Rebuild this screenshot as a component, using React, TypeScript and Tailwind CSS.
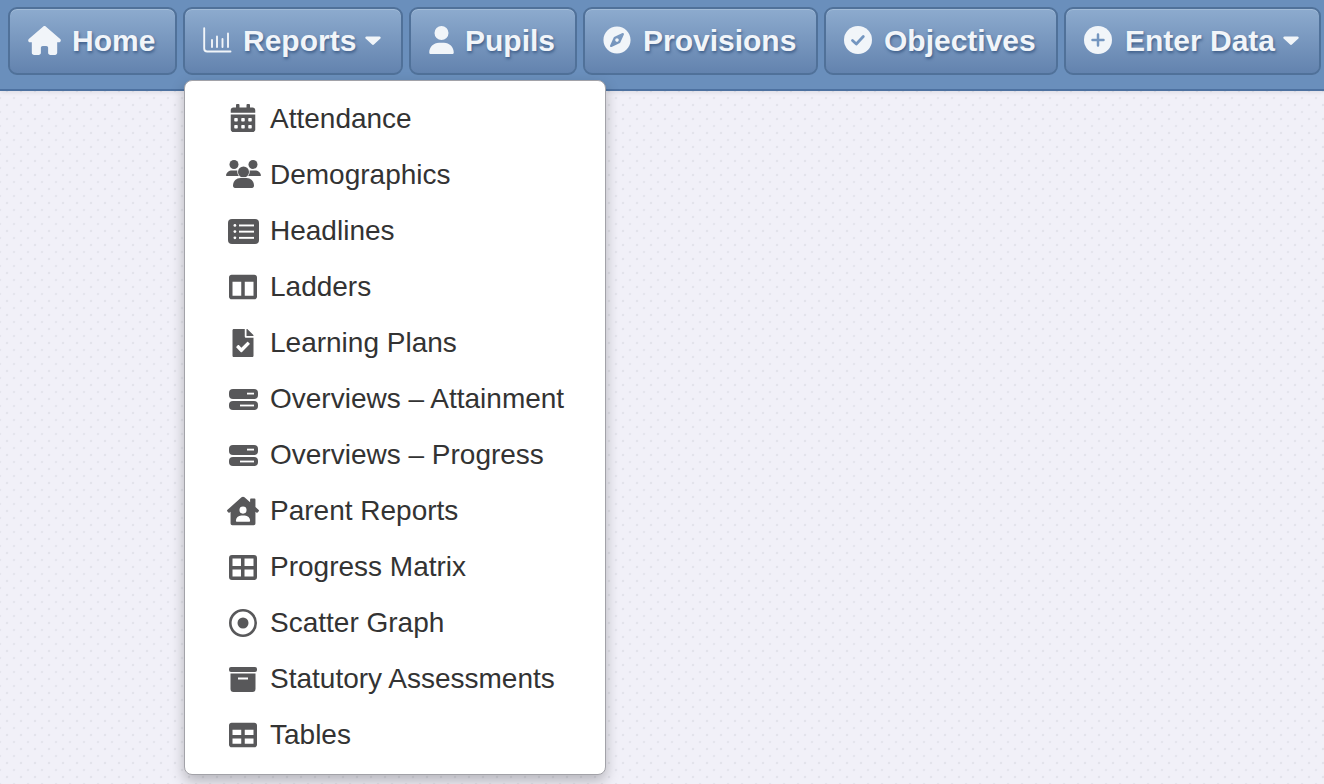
import React from "react";
import { FaCompass, FaCalendarAlt, FaColumns, FaHouseUser, FaTable } from "react-icons/fa";
import { FaHouse, FaUser } from "react-icons/fa6";

const ChartIcon = () => (
  <svg viewBox="0 0 29 26" className="w-[29px] h-[26px]" fill="none" stroke="currentColor" strokeWidth="1.9" strokeLinecap="round">
    <path d="M1.2 1.2 V21.5 a3 3 0 0 0 3 3 H27.500" />
    <path d="M9 13 V20 M14 9.500 V20 M19.500 12 V20 M25 6.500 V20" />
  </svg>
);

const Caret = () => (
  <svg viewBox="0 0 16 9" className="w-[16px] h-[9px]" fill="currentColor">
    <path d="M1.500 0.500h13a1.200 1.200 0 0 1 .9 2l-6.500 6a1.200 1.200 0 0 1-1.800 0l-6.500-6a1.200 1.200 0 0 1 .9-2z" />
  </svg>
);

const CheckCircle = () => (
  <svg viewBox="0 0 28 28" className="w-[28px] h-[28px]">
    <circle cx="14" cy="14" r="14" fill="currentColor" />
    <path d="M8.500 14.500l3.800 3.500 7-7.500" fill="none" stroke="#7496c0" strokeWidth="2.800" strokeLinecap="round" strokeLinejoin="round" />
  </svg>
);

const PlusCircle = () => (
  <svg viewBox="0 0 28 28" className="w-[28px] h-[28px]">
    <circle cx="14" cy="14" r="14" fill="currentColor" />
    <path d="M14 8.500v11M8.500 14h11" fill="none" stroke="#7496c0" strokeWidth="2.500" strokeLinecap="round" />
  </svg>
);

const FileCheck = () => (
  <svg viewBox="0 0 384 512" className="w-[24px] h-[28px]" fill="currentColor">
    <path d="M384 121.900V128H256V0h6.100c6.400 0 12.500 2.500 17 7l97.900 98c4.500 4.500 7 10.600 7 16.900zM248 160c-13.200 0-24-10.800-24-24V0H24C10.700 0 0 10.700 0 24v464c0 13.300 10.700 24 24 24h336c13.300 0 24-10.700 24-24V160H248zm65 121l-143 142c-4.700 4.600-12.200 4.600-16.900-.1l-82.600-83.300c-4.600-4.700-4.600-12.200.1-16.900l28.400-28.200c4.700-4.600 12.200-4.600 16.900.1l46 46.400 106.300-105.400c4.700-4.600 12.200-4.600 16.900.1l28.200 28.400c4.600 4.700 4.600 12.200-.2 16.800z" />
  </svg>
);

const Servers = () => (
  <svg viewBox="0 0 29 21" className="w-[29px] h-[21px]">
    <rect x="0" y="0" width="29" height="10" rx="4" fill="currentColor" />
    <rect x="0" y="12" width="29" height="9" rx="4" fill="currentColor" />
    <rect x="18" y="3.700" width="7" height="1.800" fill="#ffffff" />
    <rect x="11" y="15.600" width="14" height="1.800" fill="#ffffff" />
  </svg>
);

const Grid = () => (
  <svg viewBox="0 0 28 25" className="w-[28px] h-[25px]" fill="currentColor" fillRule="evenodd">
    <path d="M3 0h22a3 3 0 0 1 3 3v19a3 3 0 0 1-3 3H3a3 3 0 0 1-3-3V3a3 3 0 0 1 3-3zm.500 3.500v7.500h8.500V3.500zm12 0v7.500h9V3.500zm-12 11v7h8.500v-7zm12 0v7h9v-7z" />
  </svg>
);

const People = () => (
  <svg viewBox="0 0 35 30" className="w-[35px] h-[30px]" fill="currentColor">
    <circle cx="8" cy="4.500" r="4.500" />
    <circle cx="27" cy="4.500" r="4.500" />
    <path d="M0 16c0-3.500 3-5.500 6-5.500h5c3 0 4 2 4 5.500H1c-.6 0-1-.2-1-.5z" />
    <path d="M35 16c0-3.500-3-5.500-6-5.500h-5c-3 0-4 2-4 5.500h14c.6 0 1-.2 1-.5z" />
    <circle cx="17.500" cy="12" r="5.500" stroke="#ffffff" strokeWidth="1.400" paintOrder="stroke" />
    <path d="M7 25.500c0-4.500 3.500-7.500 7.500-7.500h6c4 0 7.500 3 7.500 7.500 0 1.500-.8 2.500-2 2.500H9c-1.200 0-2-1-2-2.500z" stroke="#ffffff" strokeWidth="1.400" paintOrder="stroke" />
  </svg>
);

const ListBox = () => (
  <svg viewBox="0 0 31 25" className="w-[31px] h-[25px]">
    <rect width="31" height="25" rx="4" fill="currentColor" />
    <g fill="#ffffff">
      <rect x="5.500" y="5" width="2.800" height="2.800" rx="1.400" />
      <rect x="5.500" y="11.200" width="2.800" height="2.800" rx="1.400" />
      <rect x="5.500" y="17.400" width="2.800" height="2.800" rx="1.400" />
      <rect x="11" y="5.500" width="15" height="1.900" />
      <rect x="11" y="11.700" width="15" height="1.900" />
      <rect x="11" y="17.900" width="15" height="1.900" />
    </g>
  </svg>
);

const Target = () => (
  <svg viewBox="0 0 28 28" className="w-[28px] h-[28px]" fill="none">
    <circle cx="14" cy="14" r="12.700" stroke="currentColor" strokeWidth="2.600" />
    <circle cx="14" cy="14" r="5.500" fill="currentColor" />
  </svg>
);

const Box = () => (
  <svg viewBox="0 0 28 25" className="w-[28px] h-[25px]" fill="currentColor">
    <rect x="0" y="0" width="28" height="5" rx="2" />
    <path d="M1.500 6.500h25V22a3 3 0 0 1-3 3h-19a3 3 0 0 1-3-3z" />
    <rect x="9" y="10.500" width="10" height="2" fill="#ffffff" />
  </svg>
);

const navItems: { label: string; icon: React.ReactNode; caret?: string; width: string; gap: string }[] = [
  { label: "Home", icon: <FaHouse className="w-[33px] h-[29px]" />, width: "w-[169px]", gap: "gap-[11px]" },
  { label: "Reports", icon: <ChartIcon />, caret: "ml-[-2px]", width: "w-[220px]", gap: "gap-[11px]" },
  { label: "Pupils", icon: <FaUser className="w-[25px] h-[28px]" />, width: "w-[168px]", gap: "gap-[11px]" },
  { label: "Provisions", icon: <FaCompass className="w-[28px] h-[28px]" />, width: "w-[235px]", gap: "gap-[12px]" },
  { label: "Objectives", icon: <CheckCircle />, width: "w-[234px]", gap: "gap-[12px]" },
  { label: "Enter Data", icon: <PlusCircle />, caret: "ml-[-5px]", width: "w-[257px]", gap: "gap-[13px]" },
];

const menuItems: { label: string; icon: React.ReactNode }[] = [
  { label: "Attendance", icon: <span className="mb-[2px]"><FaCalendarAlt className="w-[26px] h-[28px]" /></span> },
  { label: "Demographics", icon: <People /> },
  { label: "Headlines", icon: <ListBox /> },
  { label: "Ladders", icon: <FaColumns className="w-[28px] h-[28px]" /> },
  { label: "Learning Plans", icon: <FileCheck /> },
  { label: "Overviews – Attainment", icon: <Servers /> },
  { label: "Overviews – Progress", icon: <Servers /> },
  { label: "Parent Reports", icon: <FaHouseUser className="w-[32px] h-[32px]" /> },
  { label: "Progress Matrix", icon: <Grid /> },
  { label: "Scatter Graph", icon: <Target /> },
  { label: "Statutory Assessments", icon: <Box /> },
  { label: "Tables", icon: <FaTable className="w-[28px] h-[28px]" /> },
];

export default function App() {
  return (
    <div className="relative h-[784px] w-[1324px] overflow-hidden bg-[#f1f0f8] bg-[radial-gradient(circle,#e3e3eb_1.4px,transparent_1.6px),radial-gradient(circle,#e5e5ed_1.4px,transparent_1.6px)] bg-[size:14px_14px] bg-[position:0_0,7px_7px] font-['Liberation_Sans',Arial,sans-serif]">
      <nav className="flex h-[91px] gap-[6px] border-b-[2px] border-[#4d71a0] bg-[#6a8fbc] pl-[8px] pt-[7px] shadow-[0_2px_4px_rgba(0,0,0,0.07)]">
        {navItems.map((item) => (
          <div
            key={item.label}
            className={`${item.width} ${item.gap} flex h-[68px] items-center rounded-[9px] border-[2px] border-[#507199] bg-gradient-to-b from-[#8dabce] to-[#6383ae] pb-[2px] pl-[18px] text-[30px] font-bold text-[#f1f5f9] shadow-[inset_0_1px_0_#a3bcd8] [text-shadow:1px_2px_3px_#3f5f8a]`}
          >
            {item.icon}
            <span>{item.label}</span>
            {item.caret && <span className={item.caret}><Caret /></span>}
          </div>
        ))}
      </nav>
      <div className="absolute left-[184px] top-[80px] h-[695px] w-[422px] rounded-[8px] border border-[#a2a2a8] bg-white pt-[10px] shadow-[0_6px_14px_rgba(0,0,0,0.25)]">
        {menuItems.map((item) => (
          <div key={item.label} className="flex h-[56px] items-center text-[28px] text-[#333333]">
            <span className="ml-[39px] flex w-[38px] items-center justify-center text-[#58585a]">{item.icon}</span>
            <span className="ml-[8px]">{item.label}</span>
          </div>
        ))}
      </div>
    </div>
  );
}
